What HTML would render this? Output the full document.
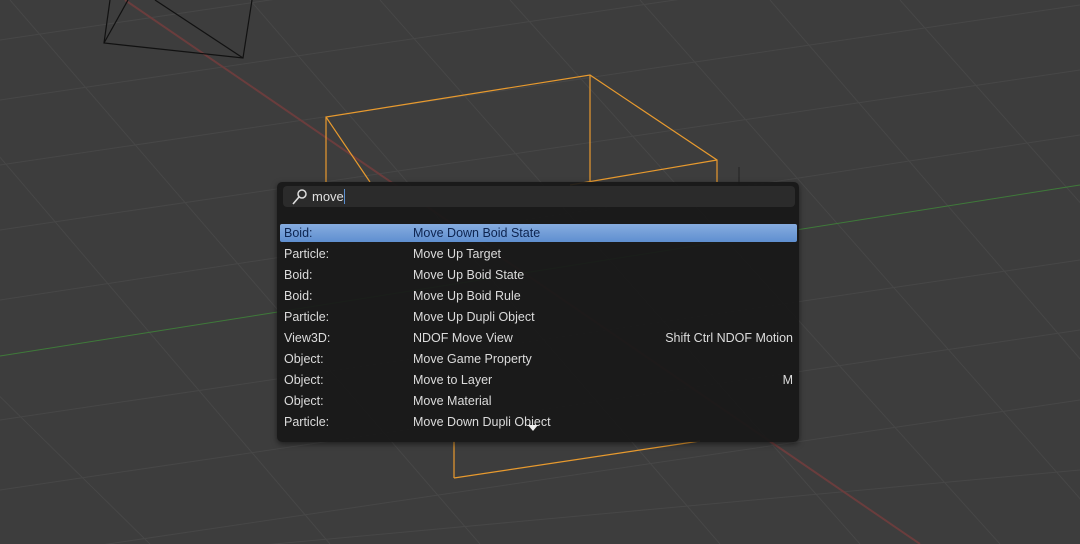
<!DOCTYPE html>
<html><head><style>
body{margin:0;width:1080px;height:544px;overflow:hidden;background:#3d3d3d;font-family:"Liberation Sans","DejaVu Sans",sans-serif;position:relative}
svg{position:absolute;left:0;top:0}
.pop{position:absolute;left:277px;top:182px;width:522px;height:260px;background:rgba(24,24,24,0.93);border-radius:5px;box-shadow:0 2px 6px rgba(0,0,0,.5)}
.search{position:absolute;left:6px;top:4px;width:512px;height:21px;background:#2b2b2b;border-radius:4px}
.search span{position:absolute;left:29px;top:3px;color:#e0e0e0;font-size:13px}
.cur{position:absolute;left:61px;top:3px;width:1px;height:15px;background:#5a8fd0}
.row{position:absolute;left:3px;width:517px;height:18px;font-size:12.5px;color:#dcdcdc;line-height:18px}
.row .a{position:absolute;left:4px}.row .b{position:absolute;left:133px}.row .c{position:absolute;right:4px}
.sel{background:linear-gradient(#86acdf,#5f8fd0);color:#0d2450;border-radius:2px}
</style></head><body>
<svg width="1080" height="544">
<g stroke="#474747" stroke-width="1" fill="none">
<line x1="0" y1="40" x2="1080" y2="-120"/><line x1="0" y1="100" x2="1080" y2="-60"/><line x1="0" y1="165" x2="1080" y2="5"/><line x1="0" y1="230" x2="1080" y2="70"/><line x1="0" y1="300" x2="1080" y2="135"/><line x1="0" y1="420" x2="1080" y2="260"/><line x1="0" y1="490" x2="1080" y2="330"/><line x1="0" y1="560" x2="1080" y2="400"/><line x1="100" y1="560" x2="1080" y2="470"/>
<line x1="-100" y1="40" x2="330" y2="544"/><line x1="10" y1="0" x2="480" y2="544"/><line x1="250" y1="0" x2="720" y2="544"/><line x1="380" y1="0" x2="860" y2="544"/><line x1="510" y1="0" x2="1000" y2="544"/><line x1="640" y1="0" x2="1120" y2="544"/><line x1="770" y1="0" x2="1240" y2="544"/><line x1="900" y1="0" x2="1300" y2="450"/><line x1="-200" y1="200" x2="150" y2="544"/>
</g>
<line x1="125" y1="0" x2="920" y2="544" stroke="#6a3d3d" stroke-width="2"/>
<line x1="0" y1="356" x2="1080" y2="185" stroke="#3f7a3a" stroke-width="1"/>
<g stroke="#111" stroke-width="1.2" fill="none"><polyline points="110,0 104,43 243,58 252,0"/><line x1="128" y1="0" x2="104" y2="43"/><line x1="155" y1="0" x2="243" y2="58"/></g>
<g stroke="#e89a2e" stroke-width="1.2" fill="none">
<polyline points="326,182 326,117 590,75 717,160 717,182"/><line x1="590" y1="75" x2="590" y2="182"/><line x1="326" y1="117" x2="370" y2="182"/><line x1="454" y1="441" x2="454" y2="478"/><line x1="454" y1="478" x2="700" y2="441"/><line x1="570" y1="185" x2="717" y2="160"/>
</g>
<line x1="739" y1="167" x2="739" y2="185" stroke="#222"/>
</svg>
<div class="pop">
<div class="search"><svg width="20" height="20" style="left:7px;top:1px"><circle cx="12" cy="7" r="4" stroke="#ddd" stroke-width="1.5" fill="none"/><line x1="9" y1="10" x2="3" y2="17" stroke="#ddd" stroke-width="1.6"/></svg><span>move</span><div class="cur"></div></div>
<div class="row sel" style="top:42px"><span class="a">Boid:</span><span class="b">Move Down Boid State</span></div>
<div class="row" style="top:63px"><span class="a">Particle:</span><span class="b">Move Up Target</span></div>
<div class="row" style="top:84px"><span class="a">Boid:</span><span class="b">Move Up Boid State</span></div>
<div class="row" style="top:105px"><span class="a">Boid:</span><span class="b">Move Up Boid Rule</span></div>
<div class="row" style="top:126px"><span class="a">Particle:</span><span class="b">Move Up Dupli Object</span></div>
<div class="row" style="top:147px"><span class="a">View3D:</span><span class="b">NDOF Move View</span><span class="c">Shift Ctrl NDOF Motion</span></div>
<div class="row" style="top:168px"><span class="a">Object:</span><span class="b">Move Game Property</span></div>
<div class="row" style="top:189px"><span class="a">Object:</span><span class="b">Move to Layer</span><span class="c">M</span></div>
<div class="row" style="top:210px"><span class="a">Object:</span><span class="b">Move Material</span></div>
<div class="row" style="top:231px"><span class="a">Particle:</span><span class="b">Move Down Dupli Object</span></div>
<div style="position:absolute;left:251px;top:243px;width:0;height:0;border-left:5px solid transparent;border-right:5px solid transparent;border-top:6px solid #eee"></div>
</div>
</body></html>
